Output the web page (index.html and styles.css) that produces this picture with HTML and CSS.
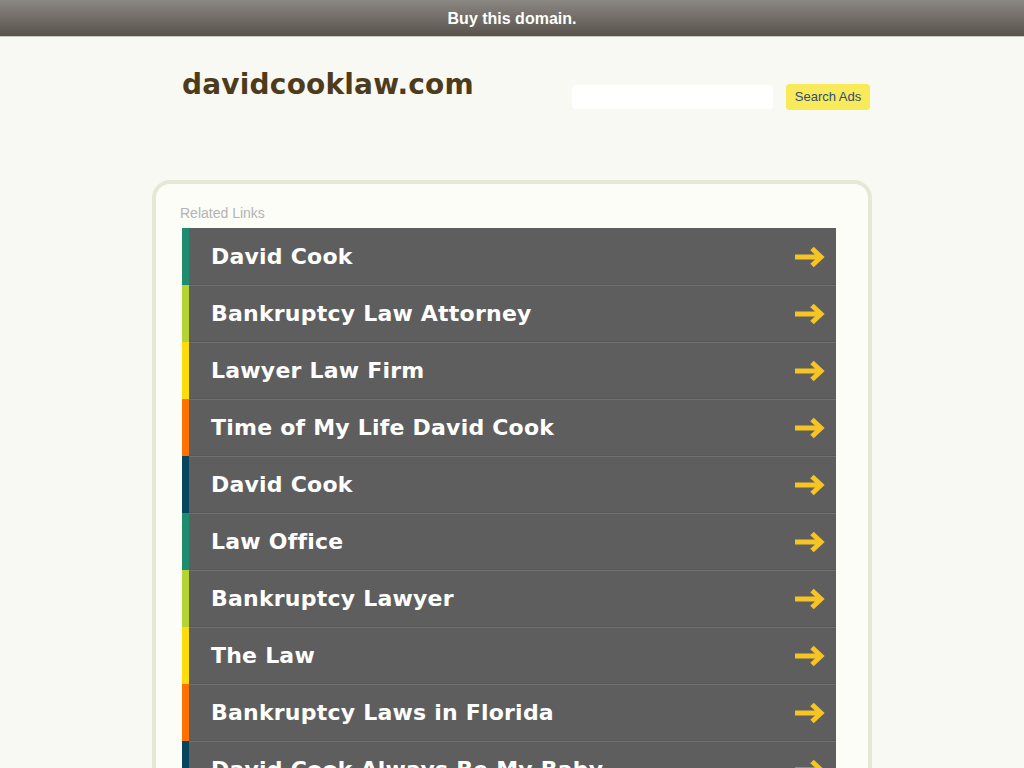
FILE: index.html
```html
<!DOCTYPE html>
<html>
<head>
<meta charset="utf-8">
<title>davidcooklaw.com</title>
<link rel="stylesheet" href="styles.css">
</head>
<body>
<div class="topbar">Buy this domain.</div>
<div class="page">
  <div class="header">
    <div class="title">davidcooklaw.com</div>
    <div class="search">
      <div class="search-input"></div>
      <div class="search-btn">Search Ads</div>
    </div>
  </div>
  <div class="box">
    <div class="related">Related Links</div>
    <ul class="links">
      <li class="row c1"><span class="stripe"></span><span class="label">David Cook</span><svg class="arrow" viewBox="0 0 32 24"><path d="M1 12H25" /><path d="M18 3.5L27 12L18 20.5" /></svg></li>
      <li class="row c2"><span class="stripe"></span><span class="label">Bankruptcy Law Attorney</span><svg class="arrow" viewBox="0 0 32 24"><path d="M1 12H25" /><path d="M18 3.5L27 12L18 20.5" /></svg></li>
      <li class="row c3"><span class="stripe"></span><span class="label">Lawyer Law Firm</span><svg class="arrow" viewBox="0 0 32 24"><path d="M1 12H25" /><path d="M18 3.5L27 12L18 20.5" /></svg></li>
      <li class="row c4"><span class="stripe"></span><span class="label">Time of My Life David Cook</span><svg class="arrow" viewBox="0 0 32 24"><path d="M1 12H25" /><path d="M18 3.5L27 12L18 20.5" /></svg></li>
      <li class="row c5"><span class="stripe"></span><span class="label">David Cook</span><svg class="arrow" viewBox="0 0 32 24"><path d="M1 12H25" /><path d="M18 3.5L27 12L18 20.5" /></svg></li>
      <li class="row c1"><span class="stripe"></span><span class="label">Law Office</span><svg class="arrow" viewBox="0 0 32 24"><path d="M1 12H25" /><path d="M18 3.5L27 12L18 20.5" /></svg></li>
      <li class="row c2"><span class="stripe"></span><span class="label">Bankruptcy Lawyer</span><svg class="arrow" viewBox="0 0 32 24"><path d="M1 12H25" /><path d="M18 3.5L27 12L18 20.5" /></svg></li>
      <li class="row c3"><span class="stripe"></span><span class="label">The Law</span><svg class="arrow" viewBox="0 0 32 24"><path d="M1 12H25" /><path d="M18 3.5L27 12L18 20.5" /></svg></li>
      <li class="row c4"><span class="stripe"></span><span class="label">Bankruptcy Laws in Florida</span><svg class="arrow" viewBox="0 0 32 24"><path d="M1 12H25" /><path d="M18 3.5L27 12L18 20.5" /></svg></li>
      <li class="row c5"><span class="stripe"></span><span class="label">David Cook Always Be My Baby</span><svg class="arrow" viewBox="0 0 32 24"><path d="M1 12H25" /><path d="M18 3.5L27 12L18 20.5" /></svg></li>
    </ul>
  </div>
</div>
</body>
</html>
```
FILE: styles.css
```css
html, body {
  margin: 0;
  padding: 0;
  background: #f8f9f3;
}
.topbar {
  height: 36px;
  line-height: 38px;
  text-align: center;
  color: #ffffff;
  font-family: "Liberation Sans", Arial, sans-serif;
  font-weight: bold;
  font-size: 16px;
  background: linear-gradient(to bottom, #8b8782 0%, #6f6a64 55%, #57524c 100%);
  border-bottom: 1px solid #c9c8c0;
}
.page {
  width: 720px;
  margin: 0 auto;
}
.header {
  display: flex;
  justify-content: space-between;
  align-items: flex-start;
  height: 143px;
}
.title {
  margin: 31px 0 0 30px;
  font-family: "DejaVu Sans", sans-serif;
  font-weight: bold;
  font-size: 28px;
  line-height: 34px;
  letter-spacing: 0.2px;
  color: #4d3b1c;
}
.search {
  display: flex;
  align-items: flex-start;
  gap: 13px;
  margin: 47px 2px 0 0;
}
.search-input {
  width: 201px;
  height: 24px;
  margin-top: 1px;
  background: #ffffff;
  border-radius: 4px;
}
.search-btn {
  width: 84px;
  height: 26px;
  line-height: 26px;
  text-align: center;
  background: #f8ea58;
  border-radius: 4px;
  font-family: "Liberation Sans", Arial, sans-serif;
  font-size: 13px;
  color: #2e4a7e;
}
.box {
  border: 4px solid #e5e8d5;
  border-radius: 18px;
  background: #fdfdf8;
  padding: 22px 32px 40px 26px;
}
.related {
  font-family: "Liberation Sans", Arial, sans-serif;
  font-size: 14px;
  line-height: 15px;
  color: #b3b3b3;
  margin: 0 0 7px -2px;
}
.links {
  list-style: none;
  margin: 0;
  padding: 0;
}
.row {
  display: flex;
  align-items: center;
  height: 57px;
  background: #5e5e5e;
  position: relative;
}
.row + .row::before {
  content: "";
  position: absolute;
  left: 7px;
  right: 0;
  top: 0;
  height: 1px;
  background: #717171;
}
.row + .row::after {
  content: "";
  position: absolute;
  left: 7px;
  right: 0;
  top: -1px;
  height: 1px;
  background: #585858;
}
.stripe {
  align-self: stretch;
  width: 7px;
  flex: none;
}
.c1 .stripe { background: #1e8c6e; }
.c2 .stripe { background: #b6d334; }
.c3 .stripe { background: #ffdb0a; }
.c4 .stripe { background: #ff7200; }
.c5 .stripe { background: #05465e; }
.label {
  flex: 1;
  padding-left: 22px;
  font-family: "DejaVu Sans", sans-serif;
  font-weight: bold;
  font-size: 22px;
  letter-spacing: 0.22px;
  color: #ffffff;
}
.arrow {
  width: 32px;
  height: 24px;
  margin-right: 10px;
  flex: none;
  fill: none;
  stroke: #f6c423;
  stroke-width: 5;
}
```
